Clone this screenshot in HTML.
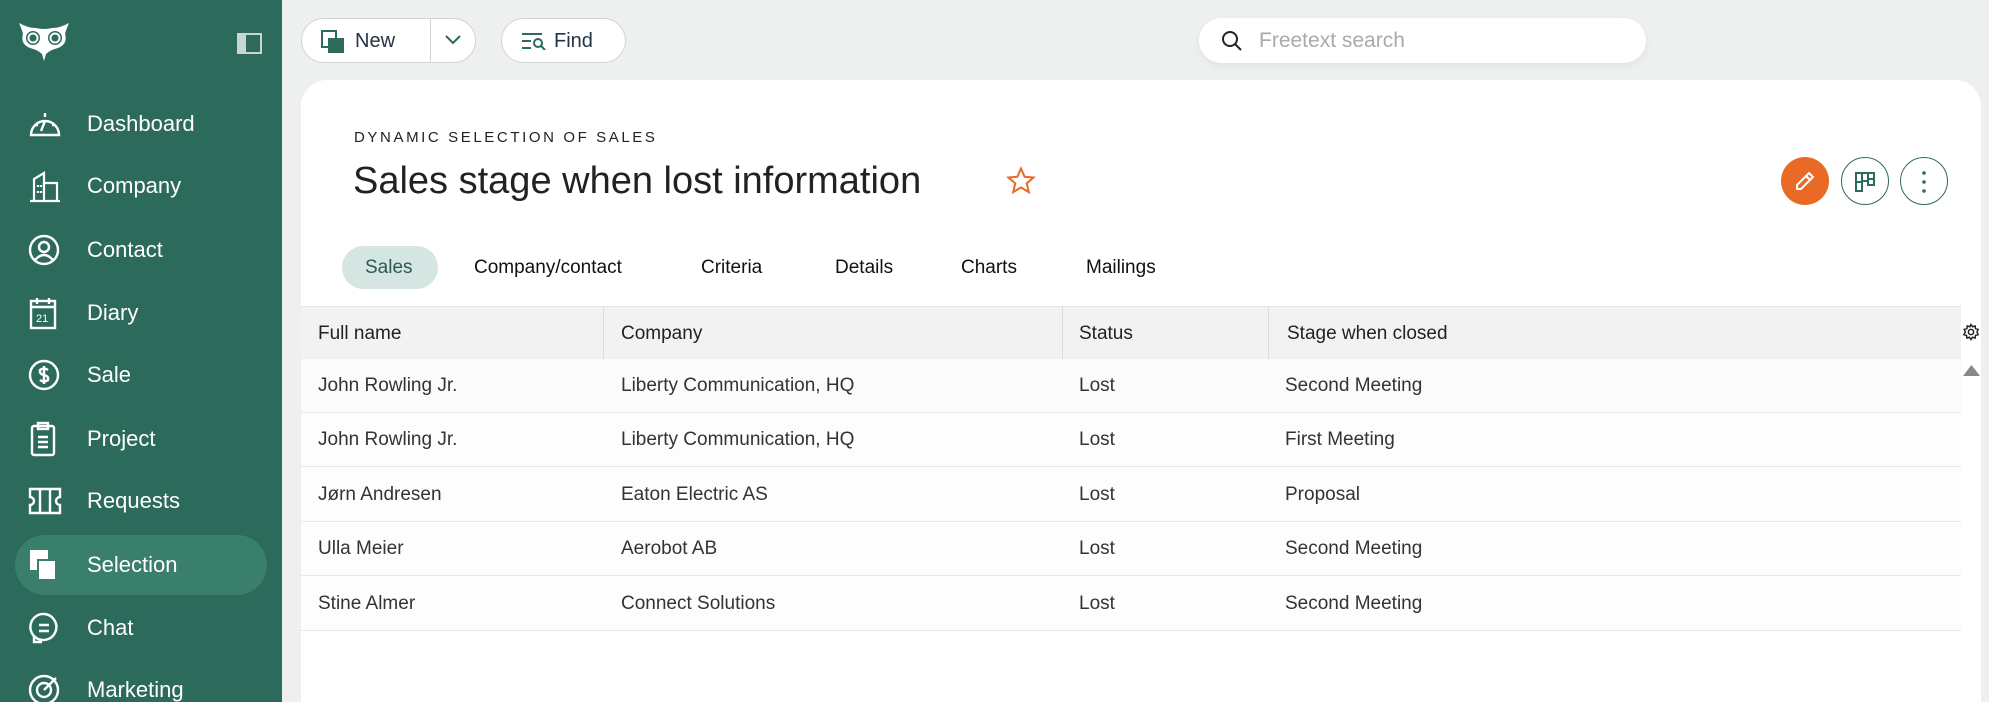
<!DOCTYPE html>
<html style="overflow:hidden;width:1989px;height:702px"><head><meta charset="utf-8"><style>
*{box-sizing:border-box;margin:0;padding:0}
body{width:1989px;height:702px;overflow:hidden;background:#eef0ef;font-family:"Liberation Sans",sans-serif;position:relative;color:#222}
.sb{position:absolute;left:0;top:0;width:282px;height:702px;background:#2c6a5c}
.nav{position:absolute;left:0;width:282px;height:60px;color:#fff;font-size:22px}
.nav span{position:absolute;left:87px;top:50%;transform:translateY(-50%)}
.nav svg{position:absolute;left:28px;top:50%;transform:translateY(-50%)}
.nav.sel{left:15px;width:252px;background:#3a7f6b;border-radius:30px}
.nav.sel span{left:72px}.nav.sel svg{left:13px}
.btn{position:absolute;background:#fff;border:1px solid #cfd5d3;border-radius:24px;height:45px;top:18px;font-size:20px;color:#234}
.card{position:absolute;left:301px;top:80px;width:1680px;height:622px;background:#fff;border-radius:26px 26px 0 0}
.tab{position:absolute;top:257px;font-size:19px;color:#111}
.th{position:absolute;top:306px;left:301px;width:1660px;height:53px;background:#f2f2f2;border-top:1px solid #e4e4e4}
.cell{position:absolute;font-size:19px;color:#333}
.row{position:absolute;left:301px;width:1660px;border-bottom:1px solid #e8e8e8}
.sep{position:absolute;top:306px;width:1px;height:53px;background:#dcdcdc}
.cb{position:absolute;width:48px;height:48px;border-radius:50%;top:157px}
</style></head><body>
<div class="sb">
<svg style="position:absolute;left:18px;top:22px" width="52" height="40" viewBox="0 0 52 40"><path d="M1 1 Q10 6 18 6 Q26 8 34 6 Q42 6 51 1 Q48 8 47 12 Q50 22 40 26 Q32 28 28 32 L26 39 L24 32 Q20 28 12 26 Q2 22 5 12 Q4 8 1 1Z" fill="#fff"/><circle cx="15" cy="16" r="7" fill="#2c6a5c"/><circle cx="37" cy="16" r="7" fill="#2c6a5c"/><circle cx="15" cy="16" r="4.5" fill="none" stroke="#fff" stroke-width="2"/><circle cx="37" cy="16" r="4.5" fill="none" stroke="#fff" stroke-width="2"/></svg>
<svg style="position:absolute;left:237px;top:33px" width="25" height="21"><rect x="1" y="1" width="23" height="19" fill="none" stroke="#c8d6d2" stroke-width="2"/><rect x="1" y="1" width="8" height="19" fill="#c8d6d2"/></svg>
<div class="nav" style="top:94px"><svg width="34" height="30" viewBox="0 0 34 30" fill="none" stroke="#fff" stroke-width="2.4"><path d="M3 26 A14 14 0 1 1 31 26 Z"/><path d="M17 12 L13 22M17 4v4M7 16h3M24 16h3"/></svg><span>Dashboard</span></div>
<div class="nav" style="top:156px"><svg width="34" height="34" viewBox="0 0 34 34" fill="none" stroke="#fff" stroke-width="2.2"><path d="M2 32h30M6 32V10l10-6v28M16 14h13v18M10 16v2M10 22v2M13 16v2M13 22v2"/></svg><span>Company</span></div>
<div class="nav" style="top:220px"><svg width="32" height="32" viewBox="0 0 32 32" fill="none" stroke="#fff" stroke-width="2.4"><circle cx="16" cy="16" r="14"/><circle cx="16" cy="13" r="5"/><path d="M7 26 Q16 16 25 26"/></svg><span>Contact</span></div>
<div class="nav" style="top:283px"><svg width="30" height="34" viewBox="0 0 30 34" fill="none" stroke="#fff" stroke-width="2.4"><rect x="3" y="5" width="24" height="27"/><path d="M3 11h24M9 2v6M21 2v6"/><text x="8" y="26" font-size="11" fill="#fff" stroke="none" font-family="Liberation Sans">21</text></svg><span>Diary</span></div>
<div class="nav" style="top:345px"><svg width="32" height="32" viewBox="0 0 32 32" fill="none" stroke="#fff" stroke-width="2.4"><circle cx="16" cy="16" r="14"/><path d="M20 11 Q16 8 12 11 Q11 15 16 16 Q21 17 20 21 Q16 24 12 21M16 7v18"/></svg><span>Sale</span></div>
<div class="nav" style="top:409px"><svg width="30" height="36" viewBox="0 0 30 36" fill="none" stroke="#fff" stroke-width="2.4"><rect x="4" y="5" width="22" height="29" rx="2"/><rect x="10" y="2" width="10" height="6"/><path d="M10 16h10M10 21h10M10 26h10"/></svg><span>Project</span></div>
<div class="nav" style="top:471px"><svg width="34" height="28" viewBox="0 0 34 28" fill="none" stroke="#fff" stroke-width="2.4"><path d="M2 2h30v8a4 4 0 0 0 0 8v8H2v-8a4 4 0 0 0 0-8z M12 2v24M22 2v24"/></svg><span>Requests</span></div>
<div class="nav sel" style="top:535px"><svg width="30" height="34" viewBox="0 0 30 34"><rect x="2" y="2" width="18" height="20" fill="#fff"/><rect x="10" y="12" width="18" height="20" fill="#fff" stroke="#3a7f6b" stroke-width="2"/></svg><span>Selection</span></div>
<div class="nav" style="top:598px"><svg width="32" height="34" viewBox="0 0 32 34" fill="none" stroke="#fff" stroke-width="2.4"><path d="M16 3a13 13 0 1 1 -10 22v6h8 M6 25 A13 13 0 0 1 16 3"/><path d="M11 14h10M11 20h10"/></svg><span>Chat</span></div>
<div class="nav" style="top:660px"><svg width="32" height="32" viewBox="0 0 32 32" fill="none" stroke="#fff" stroke-width="2.4"><circle cx="16" cy="16" r="14"/><circle cx="16" cy="16" r="7"/><path d="M16 16L28 4"/></svg><span>Marketing</span></div>
</div>

<div class="btn" style="left:301px;width:175px"><svg style="position:absolute;left:19px;top:11px" width="24" height="24" viewBox="0 0 24 24" fill="none" stroke="#2c6a5c" stroke-width="2"><rect x="1" y="1" width="14" height="16"/><rect x="8" y="9" width="14" height="13" fill="#2c6a5c"/></svg><span style="position:absolute;left:53px;top:11px">New</span><div style="position:absolute;left:128px;top:0;width:1px;height:43px;background:#cfd5d3"></div><svg style="position:absolute;left:142px;top:15px" width="18" height="12"><path d="M2 2l7 7 7-7" fill="none" stroke="#2c6a5c" stroke-width="2"/></svg></div>
<div class="btn" style="left:501px;width:125px"><svg style="position:absolute;left:19px;top:13px" width="26" height="18" viewBox="0 0 26 18" fill="none" stroke="#2c6a5c" stroke-width="2"><path d="M1 2h20M1 9h9M1 16h9"/><circle cx="17" cy="11" r="4"/><path d="M20 14l4 4"/></svg><span style="position:absolute;left:52px;top:11px">Find</span></div>
<div style="position:absolute;left:1199px;top:18px;width:447px;height:45px;background:#fff;border-radius:24px;box-shadow:0 3px 8px rgba(0,0,0,.06)"><svg style="position:absolute;left:22px;top:12px" width="22" height="22" fill="none" stroke="#222" stroke-width="2"><circle cx="9" cy="9" r="7"/><path d="M14 14l6 6"/></svg><span style="position:absolute;left:60px;top:11px;font-size:21px;color:#aaa">Freetext search</span></div>

<div class="card"></div>
<div style="position:absolute;left:354px;top:129px;font-size:15px;letter-spacing:2.6px;color:#222">DYNAMIC SELECTION OF SALES</div>
<div style="position:absolute;left:353px;top:160px;font-size:38px;color:#222">Sales stage when lost information</div>
<svg style="position:absolute;left:1006px;top:166px" width="30" height="30" viewBox="0 0 24 24"><path d="M12 2l2.9 6.6 7.1.6-5.4 4.7 1.6 7-6.2-3.8-6.2 3.8 1.6-7L2 9.2l7.1-.6z" fill="none" stroke="#e86a25" stroke-width="1.6"/></svg>
<div class="cb" style="left:1781px;background:#e86a25"><svg style="position:absolute;left:12px;top:12px" width="24" height="24" viewBox="0 0 24 24" fill="none" stroke="#fff" stroke-width="2"><path d="M4 20v-4L16 4l4 4L8 20z M13 7l4 4"/></svg></div>
<div class="cb" style="left:1841px;border:1.5px solid #2c6a5c"><svg style="position:absolute;left:12px;top:13px" width="22" height="22" viewBox="0 0 22 22" fill="none" stroke="#2c6a5c" stroke-width="2"><rect x="2" y="2" width="6" height="18"/><rect x="8" y="2" width="6" height="8"/><rect x="14" y="2" width="6" height="12"/><path d="M14 8h6M2 11h6"/></svg></div>
<div class="cb" style="left:1900px;border:1.5px solid #2c6a5c"><svg style="position:absolute;left:20px;top:12px" width="6" height="24"><circle cx="3" cy="3" r="1.8" fill="#2c6a5c"/><circle cx="3" cy="12" r="1.8" fill="#2c6a5c"/><circle cx="3" cy="21" r="1.8" fill="#2c6a5c"/></svg></div>

<div style="position:absolute;left:342px;top:246px;width:96px;height:43px;border-radius:22px;background:#d4e5e2"></div>
<div class="tab" style="left:365px;color:#2c5a50">Sales</div>
<div class="tab" style="left:474px">Company/contact</div>
<div class="tab" style="left:701px">Criteria</div>
<div class="tab" style="left:835px">Details</div>
<div class="tab" style="left:961px">Charts</div>
<div class="tab" style="left:1086px">Mailings</div>

<div class="th"></div>
<div class="sep" style="left:603px"></div><div class="sep" style="left:1062px"></div><div class="sep" style="left:1268px"></div>
<div class="cell" style="left:318px;top:323px;color:#222">Full name</div>
<div class="cell" style="left:621px;top:323px;color:#222">Company</div>
<div class="cell" style="left:1079px;top:323px;color:#222">Status</div>
<div class="cell" style="left:1287px;top:323px;color:#222">Stage when closed</div>
<svg style="position:absolute;left:1962px;top:323px" width="18" height="18" viewBox="0 0 24 24" fill="none" stroke="#222" stroke-width="2"><circle cx="12" cy="12" r="3.5"/><path d="M12 2l2 3 3.5-1 .5 3.5 3.5 1-1.5 3.5 1.5 3.5-3.5 1-.5 3.5-3.5-1-2 3-2-3-3.5 1-.5-3.5-3.5-1L4.5 12 3 8.5l3.5-1L7 4l3.5 1z"/></svg>
<svg style="position:absolute;left:1963px;top:364px" width="17" height="12"><path d="M0 12L8.5 1 17 12z" fill="#888"/></svg>

<div class="row" style="top:359px;height:54px;background:#fbfbfb"></div>
<div class="row" style="top:413px;height:54px;background:#fdfdfd"></div>
<div class="row" style="top:467px;height:55px;background:#fdfdfd"></div>
<div class="row" style="top:522px;height:54px;background:#fdfdfd"></div>
<div class="row" style="top:576px;height:55px;background:#fdfdfd"></div>

<div class="cell" style="left:318px;top:375px">John Rowling Jr.</div><div class="cell" style="left:621px;top:375px">Liberty Communication, HQ</div><div class="cell" style="left:1079px;top:375px">Lost</div><div class="cell" style="left:1285px;top:375px">Second Meeting</div>
<div class="cell" style="left:318px;top:429px">John Rowling Jr.</div><div class="cell" style="left:621px;top:429px">Liberty Communication, HQ</div><div class="cell" style="left:1079px;top:429px">Lost</div><div class="cell" style="left:1285px;top:429px">First Meeting</div>
<div class="cell" style="left:318px;top:484px">Jørn Andresen</div><div class="cell" style="left:621px;top:484px">Eaton Electric AS</div><div class="cell" style="left:1079px;top:484px">Lost</div><div class="cell" style="left:1285px;top:484px">Proposal</div>
<div class="cell" style="left:318px;top:538px">Ulla Meier</div><div class="cell" style="left:621px;top:538px">Aerobot AB</div><div class="cell" style="left:1079px;top:538px">Lost</div><div class="cell" style="left:1285px;top:538px">Second Meeting</div>
<div class="cell" style="left:318px;top:593px">Stine Almer</div><div class="cell" style="left:621px;top:593px">Connect Solutions</div><div class="cell" style="left:1079px;top:593px">Lost</div><div class="cell" style="left:1285px;top:593px">Second Meeting</div>
</body></html>
